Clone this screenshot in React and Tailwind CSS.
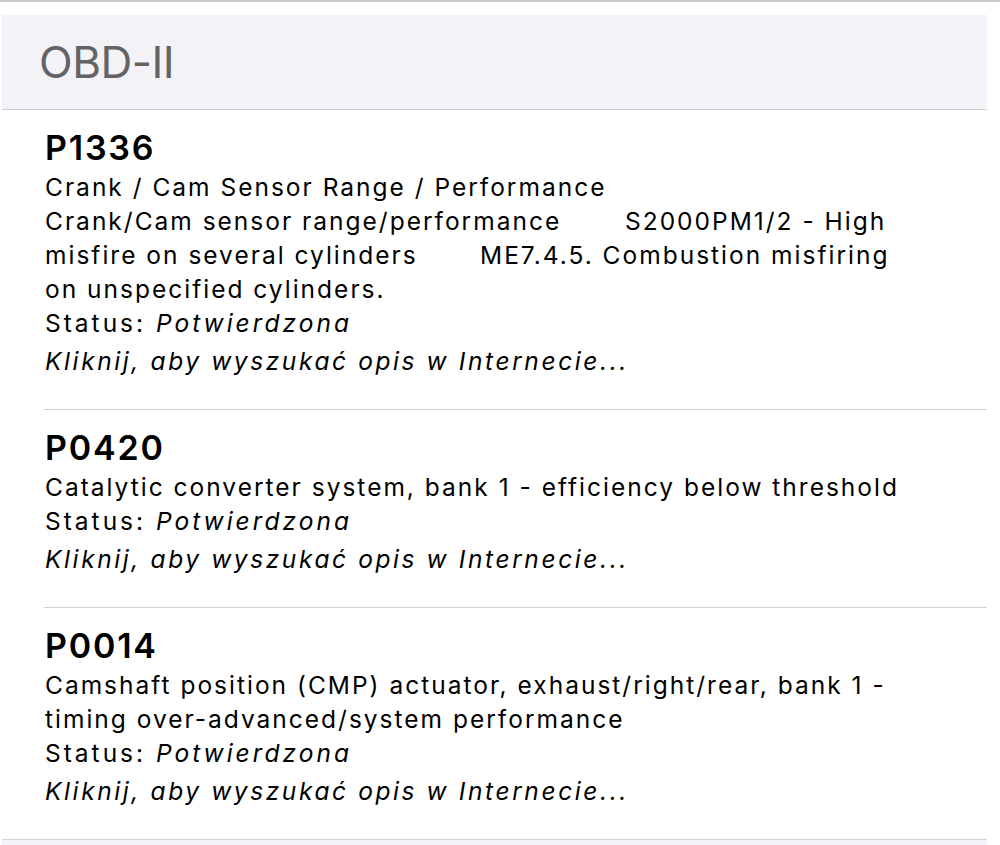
import React from 'react'

const codes = [
  {
    code: 'P1336',
    desc: 'Crank / Cam Sensor Range / Performance\nCrank/Cam sensor range/performance\tS2000PM1/2 - High misfire on several cylinders\tME7.4.5. Combustion misfiring on unspecified cylinders.',
  },
  {
    code: 'P0420',
    desc: 'Catalytic converter system, bank 1 - efficiency below threshold',
  },
  {
    code: 'P0014',
    desc: 'Camshaft position (CMP) actuator, exhaust/right/rear, bank 1 - timing over-advanced/system performance',
  },
]

export default function App() {
  return (
    <div className="w-[1000px] h-[845px] bg-white overflow-hidden text-black" style={{ fontFamily: 'Inter, "Noto Sans", sans-serif' }}>
      <div className="h-[2px] bg-[#c8c8cc]" />
      <div className="h-[13px]" />

      {/* section header */}
      <div className="ml-[2px] w-[985px] h-[95px] bg-[#f2f2f7] border-b border-[#d1d1d6] flex items-center pl-[37px]">
        <span className="text-[44px] leading-none text-[#636366] font-normal tracking-[-0.5px]">
          OBD-II
        </span>
      </div>

      {/* list */}
      <div className="ml-[44px] w-[943px]">
        {codes.map((c, i) => (
          <div
            key={c.code}
            className={`pt-[16px] pb-[31px] pr-[72px] ${i < codes.length - 1 ? 'border-b border-[#d1d1d6]' : ''}`}
          >
            <div className="pl-px text-[34px] leading-[44px] font-semibold tracking-[1.8px]">{c.code}</div>
            <div className="pl-px text-[24.5px] leading-[34px] tracking-[2px] whitespace-pre-wrap [tab-size:145px]">{c.desc}</div>
            <div className="pl-px text-[24.5px] leading-[34px] tracking-[3px]">
              Status: <span className="italic">Potwierdzona</span>
            </div>
            <div className="pl-px mt-[4px] text-[24.5px] leading-[34px] italic tracking-[2.6px]">
              Kliknij, aby wyszukać opis w Internecie...
            </div>
          </div>
        ))}
      </div>

      <div className="ml-[2px] w-[985px] h-[10px] bg-[#f2f2f7] border-t border-[#d1d1d6]" />
    </div>
  )
}
